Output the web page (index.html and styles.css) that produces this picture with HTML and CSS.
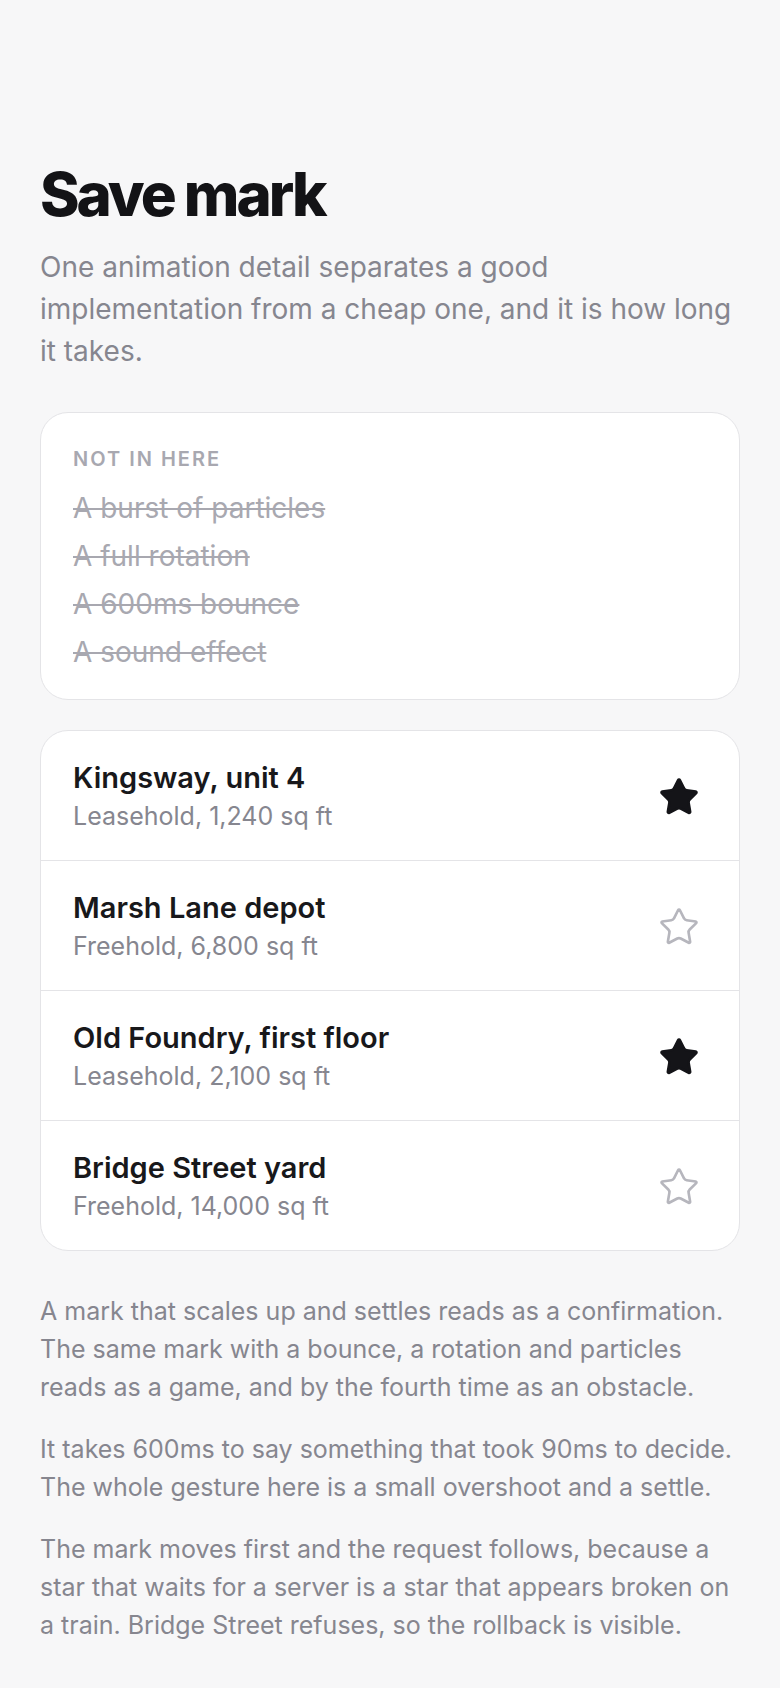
FILE: index.html
```html
<!doctype html>
<html>

<head>
<title>Save mark</title>
<meta name="viewport" content="width=780">
<link rel="stylesheet" href="styles.css">
</head>

<body>

<div class="page">
	<h1 class="title">Save mark</h1>
	<p class="lede">One animation detail separates a good implementation from a cheap one, and it is how long it takes.</p>

	<div class="card notCard">
		<div class="label">NOT IN HERE</div>
		<ul class="notList">
			<li>A burst of particles</li>
			<li>A full rotation</li>
			<li>A 600ms bounce</li>
			<li>A sound effect</li>
		</ul>
	</div>

	<div class="card listCard">
		<div class="row">
			<div class="rowText">
				<div class="rowTitle">Kingsway, unit 4</div>
				<div class="rowSub">Leasehold, 1,240 sq ft</div>
			</div>
			<button class="starBtn on" aria-label="Saved">
				<svg viewBox="0 0 24 24"><path d="M11.525 2.295a.53.53 0 0 1 .95 0l2.31 4.679a2.123 2.123 0 0 0 1.595 1.16l5.166.756a.53.53 0 0 1 .294.904l-3.736 3.638a2.123 2.123 0 0 0-.611 1.878l.882 5.14a.53.53 0 0 1-.771.56l-4.618-2.428a2.122 2.122 0 0 0-1.973 0L6.396 21.01a.53.53 0 0 1-.77-.56l.881-5.139a2.122 2.122 0 0 0-.611-1.879L2.16 9.795a.53.53 0 0 1 .294-.906l5.165-.755a2.122 2.122 0 0 0 1.597-1.16z"/></svg>
			</button>
		</div>
		<div class="row">
			<div class="rowText">
				<div class="rowTitle">Marsh Lane depot</div>
				<div class="rowSub">Freehold, 6,800 sq ft</div>
			</div>
			<button class="starBtn" aria-label="Save">
				<svg viewBox="0 0 24 24"><path d="M11.525 2.295a.53.53 0 0 1 .95 0l2.31 4.679a2.123 2.123 0 0 0 1.595 1.16l5.166.756a.53.53 0 0 1 .294.904l-3.736 3.638a2.123 2.123 0 0 0-.611 1.878l.882 5.14a.53.53 0 0 1-.771.56l-4.618-2.428a2.122 2.122 0 0 0-1.973 0L6.396 21.01a.53.53 0 0 1-.77-.56l.881-5.139a2.122 2.122 0 0 0-.611-1.879L2.16 9.795a.53.53 0 0 1 .294-.906l5.165-.755a2.122 2.122 0 0 0 1.597-1.16z"/></svg>
			</button>
		</div>
		<div class="row">
			<div class="rowText">
				<div class="rowTitle">Old Foundry, first floor</div>
				<div class="rowSub">Leasehold, 2,100 sq ft</div>
			</div>
			<button class="starBtn on" aria-label="Saved">
				<svg viewBox="0 0 24 24"><path d="M11.525 2.295a.53.53 0 0 1 .95 0l2.31 4.679a2.123 2.123 0 0 0 1.595 1.16l5.166.756a.53.53 0 0 1 .294.904l-3.736 3.638a2.123 2.123 0 0 0-.611 1.878l.882 5.14a.53.53 0 0 1-.771.56l-4.618-2.428a2.122 2.122 0 0 0-1.973 0L6.396 21.01a.53.53 0 0 1-.77-.56l.881-5.139a2.122 2.122 0 0 0-.611-1.879L2.16 9.795a.53.53 0 0 1 .294-.906l5.165-.755a2.122 2.122 0 0 0 1.597-1.16z"/></svg>
			</button>
		</div>
		<div class="row">
			<div class="rowText">
				<div class="rowTitle">Bridge Street yard</div>
				<div class="rowSub">Freehold, 14,000 sq ft</div>
			</div>
			<button class="starBtn" aria-label="Save">
				<svg viewBox="0 0 24 24"><path d="M11.525 2.295a.53.53 0 0 1 .95 0l2.31 4.679a2.123 2.123 0 0 0 1.595 1.16l5.166.756a.53.53 0 0 1 .294.904l-3.736 3.638a2.123 2.123 0 0 0-.611 1.878l.882 5.14a.53.53 0 0 1-.771.56l-4.618-2.428a2.122 2.122 0 0 0-1.973 0L6.396 21.01a.53.53 0 0 1-.77-.56l.881-5.139a2.122 2.122 0 0 0-.611-1.879L2.16 9.795a.53.53 0 0 1 .294-.906l5.165-.755a2.122 2.122 0 0 0 1.597-1.16z"/></svg>
			</button>
		</div>
	</div>

	<div class="notes">
		<p>A mark that scales up and settles reads as a confirmation. The same mark with a bounce, a rotation and particles reads as a game, and by the fourth time as an obstacle.</p>
		<p>It takes 600ms to say something that took 90ms to decide. The whole gesture here is a small overshoot and a settle.</p>
		<p>The mark moves first and the request follows, because a star that waits for a server is a star that appears broken on a train. Bridge Street refuses, so the rollback is visible.</p>
	</div>
</div>

</body>

</html>
```

FILE: styles.css
```css
html,body {
	margin:0;
	background-color:#f7f7f8;
	color:#18181b;
	font-family:Inter, "Liberation Sans", sans-serif;
}
.page {
	padding:161px 40px 40px;
}
.title {
	margin:0;
	font-size:60px;
	line-height:66px;
	font-weight:800;
	letter-spacing:-0.05em;
	color:#131316;
}
.lede {
	margin:19px 0 40px;
	font-size:28px;
	line-height:42px;
	color:#86868f;
}
.card {
	background:#fff;
	border:1px solid #e4e4e7;
	border-radius:28px;
}
.notCard {
	padding:28px 32px 27px;
}
.label {
	font-size:20px;
	line-height:36px;
	font-weight:600;
	letter-spacing:0.1em;
	color:#a8a8b0;
}
.notList {
	list-style:none;
	margin:11px 0 0;
	padding:0;
	display:flex;
	flex-direction:column;
	gap:8px;
}
.notList li {
	font-size:28px;
	line-height:40px;
	color:#a8a8b0;
	text-decoration:line-through;
	text-decoration-thickness:2px;
}
.listCard {
	margin-top:30px;
	overflow:hidden;
}
.row {
	display:flex;
	align-items:center;
	justify-content:space-between;
	padding:29px 36px 27px 32px;
	border-bottom:1px solid #e4e4e7;
}
.row:last-child {
	border-bottom:none;
}
.rowText {
	display:flex;
	flex-direction:column;
	gap:3px;
}
.rowTitle {
	font-size:29px;
	line-height:36px;
	font-weight:600;
	color:#18181b;
}
.rowSub {
	font-size:25px;
	line-height:34px;
	color:#86868f;
}
.starBtn {
	width:48px;
	height:48px;
	padding:0;
	border:none;
	background:none;
	display:flex;
	align-items:center;
	justify-content:center;
}
.starBtn svg {
	width:42px;
	height:42px;
	fill:none;
	stroke:#b6b6bd;
	stroke-width:1.5;
	stroke-linejoin:round;
}
.starBtn.on svg {
	fill:#141418;
	stroke:#141418;
}
.notes {
	margin-top:41px;
}
.notes p {
	margin:0 0 24px;
	font-size:25px;
	line-height:38px;
	color:#86868f;
}
```
